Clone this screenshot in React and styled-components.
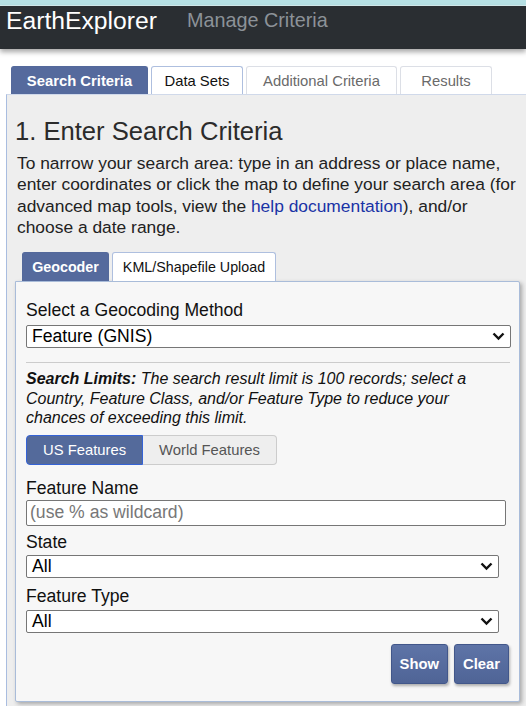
import styled, { createGlobalStyle } from "styled-components";

const GlobalStyle = createGlobalStyle`
  html, body {
    margin: 0;
    padding: 0;
    background: #ffffff;
    font-family: "Liberation Sans", Arial, sans-serif;
    color: #222;
  }
  * {
    box-sizing: border-box;
  }
`;

const TopStrip = styled.div`
  height: 6px;
  background: #b6e0e4;
  border-bottom: 1px solid #d6eef0;
`;

const Header = styled.header`
  height: 43px;
  background: #2a2e32;
  display: flex;
  align-items: flex-start;
  padding: 1px 0 0 6px;
  box-shadow: 0 3px 5px rgba(0, 0, 0, 0.35);
  position: relative;
`;

const Brand = styled.div`
  color: #ffffff;
  font-size: 24.7px;
  line-height: 28px;
`;

const HeaderLink = styled.div`
  color: #8c9298;
  font-size: 19.8px;
  line-height: 23px;
  margin: 2px 0 0 30px;
`;

const MainTabs = styled.nav`
  display: flex;
  padding-left: 11px;
  margin-top: 17px;
  gap: 3px;
`;

const Tab = styled.div`
  width: ${(p) => p.$w}px;
  height: 28px;
  display: flex;
  align-items: center;
  justify-content: center;
  font-size: 14.8px;
  white-space: nowrap;
  border: 1px solid ${(p) => (p.$active ? "#54699b" : p.$light ? "#dcdfe6" : "#aebfdf")};
  border-bottom: none;
  border-radius: 3px 3px 0 0;
  background: ${(p) => (p.$active ? "#556a9d" : "#ffffff")};
  color: ${(p) => (p.$active ? "#ffffff" : p.$light ? "#6a6a6a" : "#111")};
  font-weight: ${(p) => (p.$active ? "bold" : "normal")};
`;

const Panel = styled.section`
  background: #eeeeee;
  margin-left: 6px;
  border-left: 1px solid #a9bde0;
  border-top: 1px solid #d0d9ea;
  padding: 22px 6px 20px 8px;
  min-height: 620px;
`;

const Heading = styled.h1`
  margin: 0;
  font-size: 25.6px;
  font-weight: normal;
  line-height: 28px;
  color: #2b2b2b;
`;

const Intro = styled.p`
  margin: 8px 0 0 2px;
  font-size: 17.4px;
  line-height: 21.3px;
  color: #222;
`;

const HelpLink = styled.a`
  color: #1a33a6;
  text-decoration: none;
`;

const SubTabs = styled.div`
  display: flex;
  margin: 14px 0 0 7px;
  gap: 3px;
`;

const SubTab = styled(Tab)`
  height: 29px;
  font-size: 14.3px;
`;

const Card = styled.div`
  background: #f7f7f7;
  border: 1px solid #a9bcd9;
  border-radius: 0 2px 2px 2px;
  box-shadow: 2px 2px 4px rgba(0, 0, 0, 0.3);
  padding: 18px 10px 17px 10px;
`;

const Label = styled.label`
  display: block;
  font-size: 17.6px;
  line-height: 20px;
  color: #111;
  margin-top: ${(p) => p.$mt || 0}px;
  margin-bottom: ${(p) => p.$mb || 3}px;
`;

const SelectBox = styled.div`
  width: ${(p) => p.$w}px;
  height: 23px;
  border: 1px solid #767676;
  border-radius: 2px;
  background: #ffffff;
  display: flex;
  align-items: center;
  justify-content: space-between;
  padding: 0 5px 0 5px;
  font-size: 17.6px;
  color: #000;
`;

const TextInput = styled.input`
  display: block;
  width: ${(p) => p.$w}px;
  height: 26px;
  border: 1px solid #767676;
  border-radius: 2px;
  background: #ffffff;
  padding: 0 3px;
  font-family: inherit;
  font-size: 17.6px;
  &::placeholder {
    color: #777;
  }
`;

const Divider = styled.hr`
  border: none;
  border-top: 1px solid #cccccc;
  margin: 14px 0 6px 0;
  width: 484px;
`;

const Limits = styled.p`
  margin: 0;
  font-size: 16px;
  line-height: 19.5px;
  font-style: italic;
  color: #111;
`;

const Toggle = styled.div`
  display: flex;
  margin-top: 7px;
`;

const ToggleButton = styled.div`
  height: 30px;
  display: flex;
  align-items: center;
  padding: 0 16px;
  font-size: 14.8px;
  border: 1px solid ${(p) => (p.$active ? "#3563d6" : "#cccccc")};
  background: ${(p) => (p.$active ? "#546a9b" : "#eeeeee")};
  color: ${(p) => (p.$active ? "#ffffff" : "#555")};
  border-radius: ${(p) => (p.$first ? "4px 0 0 4px" : "0 4px 4px 0")};
  border-left-width: ${(p) => (p.$first ? 1 : 0)}px;
`;

const Actions = styled.div`
  display: flex;
  justify-content: flex-end;
  gap: 6px;
  margin-top: 11px;
`;

const ActionButton = styled.button`
  height: 40px;
  padding: 0 8px;
  font-family: inherit;
  font-size: 14.8px;
  font-weight: bold;
  color: #ffffff;
  background: linear-gradient(#5e74a7, #4f6496);
  border: 1px solid #42578a;
  border-radius: 3px;
  box-shadow: 1px 2px 3px rgba(0, 0, 0, 0.3);
`;

function Chevron() {
  return (
    <svg width="13" height="9" viewBox="0 0 13 9">
      <path d="M1.5 1.5 L6.5 6.5 L11.5 1.5" fill="none" stroke="#111" strokeWidth="2.4" />
    </svg>
  );
}

function Dropdown({ value, width }) {
  return (
    <SelectBox $w={width}>
      <span>{value}</span>
      <Chevron />
    </SelectBox>
  );
}

export default function App() {
  return (
    <>
      <GlobalStyle />
      <TopStrip />
      <Header>
        <Brand>EarthExplorer</Brand>
        <HeaderLink>Manage Criteria</HeaderLink>
      </Header>
      <MainTabs>
        <Tab $w={137} $active>Search Criteria</Tab>
        <Tab $w={92}>Data Sets</Tab>
        <Tab $w={151} $light>Additional Criteria</Tab>
        <Tab $w={92} $light>Results</Tab>
      </MainTabs>
      <Panel>
        <Heading>1. Enter Search Criteria</Heading>
        <Intro>
          To narrow your search area: type in an address or place name, enter
          coordinates or click the map to define your search area (for
          advanced map tools, view the <HelpLink href="#">help documentation</HelpLink>), and/or
          <br />
          choose a date range.
        </Intro>
        <SubTabs>
          <SubTab $w={87} $active>Geocoder</SubTab>
          <SubTab $w={164}>KML/Shapefile Upload</SubTab>
        </SubTabs>
        <Card>
          <Label $mb={5}>Select a Geocoding Method</Label>
          <Dropdown value="Feature (GNIS)" width={485} />
          <Divider />
          <Limits>
            <b>Search Limits:</b> The search result limit is 100 records; select a
            Country, Feature Class, and/or Feature Type to reduce your chances of
            exceeding this limit.
          </Limits>
          <Toggle>
            <ToggleButton $active $first>US Features</ToggleButton>
            <ToggleButton>World Features</ToggleButton>
          </Toggle>
          <Label $mt={13} $mb={2}>Feature Name</Label>
          <TextInput $w={480} placeholder="(use % as wildcard)" />
          <Label $mt={6} $mb={3}>State</Label>
          <Dropdown value="All" width={473} />
          <Label $mt={8} $mb={4}>Feature Type</Label>
          <Dropdown value="All" width={473} />
          <Actions>
            <ActionButton>Show</ActionButton>
            <ActionButton>Clear</ActionButton>
          </Actions>
        </Card>
      </Panel>
    </>
  );
}
